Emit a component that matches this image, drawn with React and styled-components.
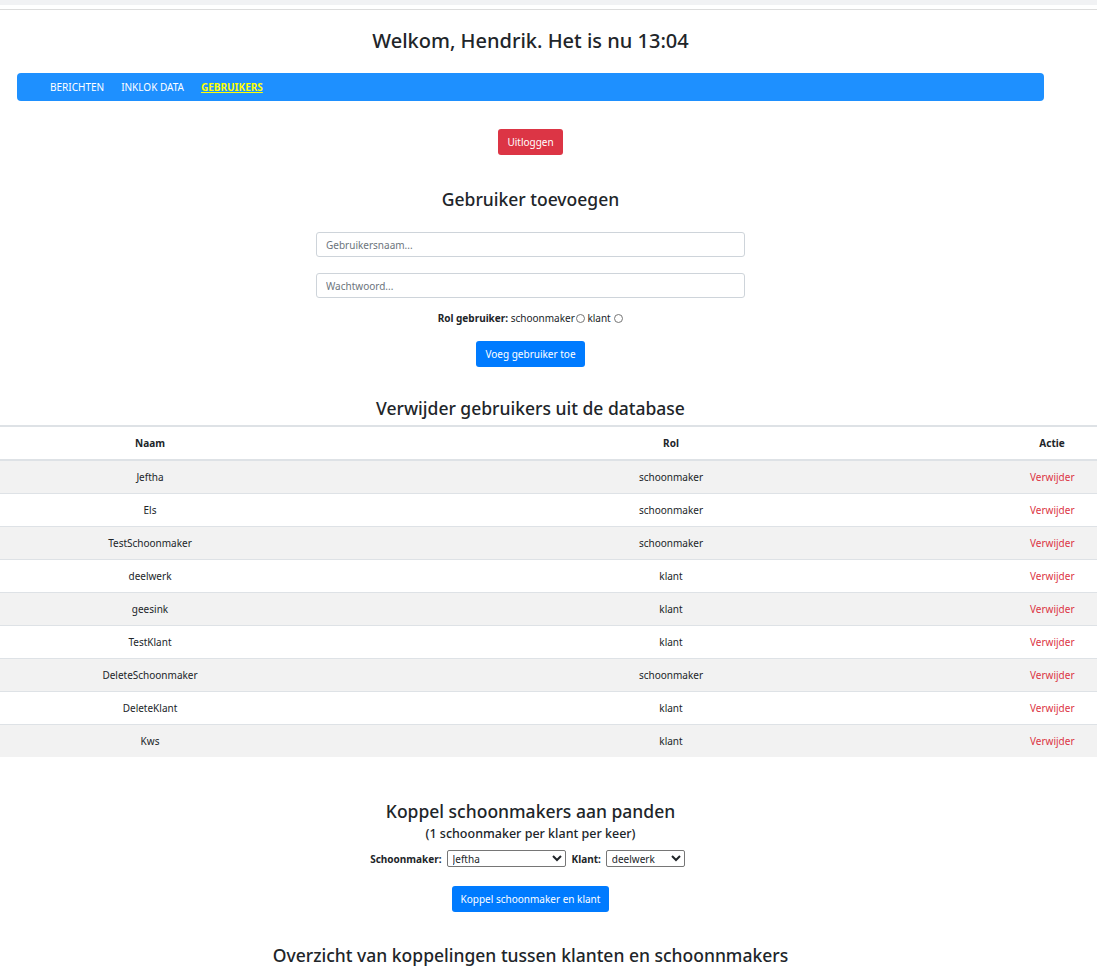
import React from 'react'
import styled, { createGlobalStyle } from 'styled-components'

const GlobalStyle = createGlobalStyle`
  html, body {
    margin: 0;
    padding: 0;
    background: #fff;
    font-family: "Noto Sans", "Open Sans", sans-serif;
    color: #212529;
  }
`

const Page = styled.div`
  width: 1097px;
`

const BrowserStrip = styled.div`
  height: 5px;
  background: #f1f2f4;
  border-bottom: 4px solid #fff;
`

const Rule = styled.div`
  height: 1px;
  background: #dcdcdc;
`

const Column = styled.div`
  width: 1061px;
  display: flex;
  flex-direction: column;
  align-items: center;
`

const Title = styled.h1`
  margin: 17px 0 0;
  height: 27px;
  font-size: 20px;
  font-weight: 500;
  line-height: 27px;
`

const NavBar = styled.nav`
  margin-top: 19px;
  align-self: stretch;
  margin-left: 17px;
  margin-right: 17px;
  height: 28px;
  background: #1e90ff;
  border-radius: 4px;
  display: flex;
  align-items: center;
  gap: 17px;
  padding-left: 33px;
`

const NavLink = styled.a`
  font-size: 10px;
  color: ${p => (p.$active ? '#ffff00' : '#fff')};
  font-weight: ${p => (p.$active ? 700 : 400)};
  text-decoration: ${p => (p.$active ? 'underline' : 'none')};
  cursor: pointer;
`

const Button = styled.button`
  margin-top: ${p => p.$top || 0}px;
  height: 26px;
  padding: 0 9px;
  border: none;
  border-radius: 3px;
  background: ${p => (p.$danger ? '#dc3545' : '#007bff')};
  color: #fff;
  font-family: inherit;
  font-size: 10px;
  cursor: pointer;
`

const Heading = styled.h2`
  margin: ${p => p.$top || 0}px 0 0;
  font-size: 17.5px;
  font-weight: 500;
  line-height: 24px;
`

const Input = styled.input`
  box-sizing: border-box;
  margin-top: ${p => p.$top || 0}px;
  width: 429px;
  height: 25px;
  padding: 0 9px;
  border: 1px solid #ced4da;
  border-radius: 3px;
  font-family: inherit;
  font-size: 10px;
  &::placeholder {
    color: #6c757d;
  }
`

const RoleLine = styled.div`
  margin-top: 13px;
  font-size: 10px;
  line-height: 14px;
  b {
    font-weight: 700;
  }
`

const Radio = styled.span`
  display: inline-block;
  vertical-align: -1px;
  width: 7px;
  height: 7px;
  margin-left: 1px;
  border: 1px solid #767676;
  border-radius: 50%;
`

const Table = styled.table`
  margin-top: 5px;
  width: 1097px;
  border-collapse: collapse;
  table-layout: fixed;
  font-size: 10px;
  border-top: 2px solid #dee2e6;
`

const Th = styled.th`
  height: 32px;
  font-weight: 700;
  text-align: center;
  padding: ${p => p.$pad || '0'};
  border-bottom: 2px solid #dee2e6;
`

const Row = styled.tr`
  background: ${p => (p.$odd ? '#f2f2f2' : '#fff')};
  border-bottom: ${p => (p.$last ? 'none' : '1px solid #dee2e6')};
`

const Td = styled.td`
  height: 32px;
  text-align: center;
  padding: ${p => p.$pad || '0'};
  color: ${p => (p.$danger ? '#dc3545' : '#212529')};
`

const Sub = styled.div`
  margin-top: 2px;
  font-size: 12.5px;
  font-weight: 500;
  line-height: 17px;
`

const SelectRow = styled.div`
  margin-top: 8px;
  display: flex;
  align-items: center;
  font-size: 10px;
  b {
    font-weight: 700;
    margin-right: 5px;
  }
`

const Select = styled.select`
  box-sizing: border-box;
  width: ${p => p.$w}px;
  height: 17px;
  margin-right: 6px;
  font-family: inherit;
  font-size: 10px;
  padding: 0 1px;
  border: 1px solid #767676;
  border-radius: 2px;
  background: #fff;
  color: #212529;
`

const users = [
  ['Jeftha', 'schoonmaker'],
  ['Els', 'schoonmaker'],
  ['TestSchoonmaker', 'schoonmaker'],
  ['deelwerk', 'klant'],
  ['geesink', 'klant'],
  ['TestKlant', 'klant'],
  ['DeleteSchoonmaker', 'schoonmaker'],
  ['DeleteKlant', 'klant'],
  ['Kws', 'klant'],
]

export default function App() {
  return (
    <Page>
      <GlobalStyle />
      <BrowserStrip />
      <Rule />
      <Column>
        <Title>Welkom, Hendrik. Het is nu 13:04</Title>
        <NavBar>
          <NavLink>BERICHTEN</NavLink>
          <NavLink>INKLOK DATA</NavLink>
          <NavLink $active>GEBRUIKERS</NavLink>
        </NavBar>
        <Button $danger $top={28}>Uitloggen</Button>
        <Heading $top={32}>Gebruiker toevoegen</Heading>
        <Input $top={21} placeholder="Gebruikersnaam..." />
        <Input $top={16} placeholder="Wachtwoord..." />
        <RoleLine>
          <b>Rol gebruiker:</b> schoonmaker<Radio /> klant <Radio />
        </RoleLine>
        <Button $top={16}>Voeg gebruiker toe</Button>
        <Heading $top={29}>Verwijder gebruikers uit de database</Heading>
      </Column>
      <Table>
        <colgroup>
          <col style={{ width: 300 }} />
          <col style={{ width: 730 }} />
          <col style={{ width: 67 }} />
        </colgroup>
        <thead>
          <tr>
            <Th>Naam</Th>
            <Th $pad="0 0 0 12px">Rol</Th>
            <Th $pad="0 23px 0 0">Actie</Th>
          </tr>
        </thead>
        <tbody>
          {users.map(([name, role], i) => (
            <Row key={name} $odd={i % 2 === 0} $last={i === users.length - 1}>
              <Td>{name}</Td>
              <Td $pad="0 0 0 12px">{role}</Td>
              <Td $pad="0 23px 0 0" $danger>Verwijder</Td>
            </Row>
          ))}
        </tbody>
      </Table>
      <Column>
        <Heading $top={42}>Koppel schoonmakers aan panden</Heading>
        <Sub>(1 schoonmaker per klant per keer)</Sub>
        <SelectRow>
          <b>Schoonmaker:</b>
          <Select $w={119} defaultValue="Jeftha">
            {users.filter(u => u[1] === 'schoonmaker').map(u => <option key={u[0]}>{u[0]}</option>)}
          </Select>
          <b>Klant:</b>
          <Select $w={79} defaultValue="deelwerk">
            {users.filter(u => u[1] === 'klant').map(u => <option key={u[0]}>{u[0]}</option>)}
          </Select>
        </SelectRow>
        <Button $top={19}>Koppel schoonmaker en klant</Button>
        <Heading $top={31}>Overzicht van koppelingen tussen klanten en schoonnmakers</Heading>
      </Column>
    </Page>
  )
}
